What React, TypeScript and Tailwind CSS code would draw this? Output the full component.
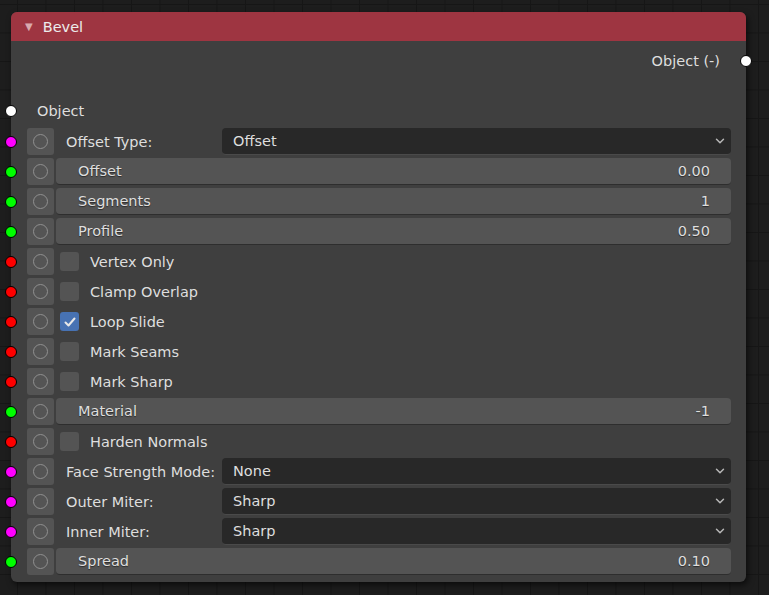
import { ChevronDown } from "lucide-react";

type Row =
  | { kind: "enum"; label: string; value: string; color: string }
  | { kind: "value"; label: string; value: string; color: string }
  | { kind: "check"; label: string; checked: boolean; color: string };

const MAGENTA = "#ff00ff";
const GREEN = "#00ff00";
const RED = "#ff0000";

const rows: Row[] = [
  { kind: "enum", label: "Offset Type:", value: "Offset", color: MAGENTA },
  { kind: "value", label: "Offset", value: "0.00", color: GREEN },
  { kind: "value", label: "Segments", value: "1", color: GREEN },
  { kind: "value", label: "Profile", value: "0.50", color: GREEN },
  { kind: "check", label: "Vertex Only", checked: false, color: RED },
  { kind: "check", label: "Clamp Overlap", checked: false, color: RED },
  { kind: "check", label: "Loop Slide", checked: true, color: RED },
  { kind: "check", label: "Mark Seams", checked: false, color: RED },
  { kind: "check", label: "Mark Sharp", checked: false, color: RED },
  { kind: "value", label: "Material", value: "-1", color: GREEN },
  { kind: "check", label: "Harden Normals", checked: false, color: RED },
  { kind: "enum", label: "Face Strength Mode:", value: "None", color: MAGENTA },
  { kind: "enum", label: "Outer Miter:", value: "Sharp", color: MAGENTA },
  { kind: "enum", label: "Inner Miter:", value: "Sharp", color: MAGENTA },
  { kind: "value", label: "Spread", value: "0.10", color: GREEN },
];

// text sits 1px below the box centre, like Blender's labels
function Text({ children, className = "" }: { children: React.ReactNode; className?: string }) {
  return <span className={`pt-[2px] ${className}`}>{children}</span>;
}

function Socket({ color, side }: { color: string; side: "left" | "right" }) {
  return (
    <span
      className={`absolute top-1/2 h-[12px] w-[12px] -translate-y-1/2 rounded-full border border-black ${
        side === "left" ? "left-[-6px]" : "right-[-6px]"
      }`}
      style={{ backgroundColor: color }}
    />
  );
}

function SocketButton() {
  return (
    <div className="flex h-[27px] w-[27px] shrink-0 items-center justify-center rounded-[3px] bg-[#545454]">
      <span className="h-[15px] w-[15px] rounded-full border-[1.5px] border-[#909090]" />
    </div>
  );
}

function CheckIcon() {
  return (
    <svg width="14" height="14" viewBox="0 0 14 14" fill="none">
      <path
        d="M2.5 7.5 L5.5 10.5 L11.5 3.5"
        stroke="#e8e8e8"
        strokeWidth="2"
        strokeLinecap="round"
        strokeLinejoin="round"
      />
    </svg>
  );
}

function NodeRow({ row }: { row: Row }) {
  return (
    <div className="relative flex h-[27px] items-center pl-[16px] pr-[15px]">
      <Socket color={row.color} side="left" />
      <SocketButton />
      {row.kind === "value" && (
        <div className="ml-[2px] flex h-[27px] flex-1 items-center justify-between rounded-[4px] border-b border-[#2e2e2e] bg-[#545454] pl-[22px] pr-[21px] [text-shadow:0_1px_1px_rgba(0,0,0,0.5)]">
          <Text>{row.label}</Text>
          <Text>{row.value}</Text>
        </div>
      )}
      {row.kind === "enum" && (
        <div className="flex flex-1 items-center">
          <Text className="w-[168px] shrink-0 pl-[12px]">{row.label}</Text>
          <div className="flex h-[27px] flex-1 items-center justify-between rounded-[4px] border-b border-[#4a4a4a] bg-[#282828] pl-[11px] pr-[4px]">
            <Text>{row.value}</Text>
            <ChevronDown size={14} strokeWidth={2.5} className="text-[#b8b8b8]" />
          </div>
        </div>
      )}
      {row.kind === "check" && (
        <div className="flex flex-1 items-center gap-[11px] pl-[6px]">
          <span
            className={`flex h-[19px] w-[19px] items-center justify-center rounded-[3px] ${
              row.checked ? "bg-[#4772b3]" : "bg-[#545454]"
            }`}
          >
            {row.checked && <CheckIcon />}
          </span>
          <Text>{row.label}</Text>
        </div>
      )}
    </div>
  );
}

export default function App() {
  return (
    <div
      className="h-[595px] w-[769px] overflow-hidden bg-[#1d1d1d] pl-[11px] pt-[12px] text-[14.5px] text-[#dedede] [font-family:'DejaVu_Sans',sans-serif]"
      style={{
        backgroundImage:
          "linear-gradient(to right, #161616 1px, transparent 1px), linear-gradient(to bottom, #161616 1px, transparent 1px)",
        backgroundSize: "28.5px 28.5px",
        backgroundPosition: "17px 4px",
      }}
    >
      <div className="relative flex w-[735px] flex-col rounded-[6px] bg-[#3f3f3f] pb-[7px] shadow-[2px_3px_6px_rgba(0,0,0,0.6)]">
        <div className="flex h-[29px] items-center gap-[10px] rounded-t-[6px] bg-[#9e3541] pl-[14px] text-[#ececec]">
          <span className="text-[10px] text-[#d9a9ae]">▼</span>
          <Text>Bevel</Text>
        </div>
        <div className="relative mt-[9px] flex h-[22px] items-center justify-end pr-[26px]">
          <Text>Object (-)</Text>
          <Socket color="#ffffff" side="right" />
        </div>
        <div className="relative mt-[28px] flex h-[22px] items-center pl-[26px]">
          <Socket color="#ffffff" side="left" />
          <Text>Object</Text>
        </div>
        <div className="mt-[6px] flex flex-col gap-[3px]">
          {rows.map((row) => (
            <NodeRow key={row.label} row={row} />
          ))}
        </div>
      </div>
    </div>
  );
}
